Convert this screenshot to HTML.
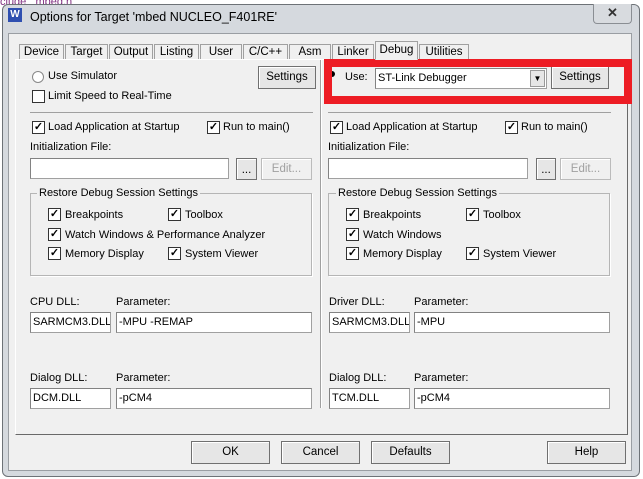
<!DOCTYPE html>
<html><head><meta charset="utf-8"><style>
*{box-sizing:border-box;margin:0;padding:0}
body{width:643px;height:479px;background:#fff;position:relative;overflow:hidden;font-family:"Liberation Sans",sans-serif;font-size:11px;color:#000}
.a{position:absolute;white-space:nowrap}
.frame{left:2px;top:4px;width:638px;height:473px;background:#d5d9de;border:1px solid #6d7277;border-radius:6px}
.client{left:8px;top:33px;width:624px;height:438px;background:#f0f0f0;border:1px solid #9a9ea3}
.tab{top:44px;height:16px;border:1px solid #a0a0a0;border-bottom:none;background:#f0f0f0;text-align:center;line-height:14px;font-size:11.5px}
.panel{left:15px;top:59px;width:613px;height:376px;border:1px solid #a0a0a0;border-top-color:#fff;border-left-color:#fff;border-right-color:#696969;border-bottom-color:#696969;background:#f0f0f0}
.btn{background:#e6e6e6;border:1px solid #707070;text-align:center;font-size:11.5px;line-height:20px;box-shadow:inset 1px 1px #fff}
.inp{background:#fff;border:1px solid #a0a0a0;border-top-color:#828282;border-left-color:#828282;height:21px;line-height:19px;padding-left:2px;font-size:11px;overflow:hidden}
.cb{width:13px;height:13px;border:1px solid #333;background:#fff;font-size:11px;line-height:11px;text-align:center;font-weight:bold}
.grp{border:1px solid #b5b5b5;box-shadow:1px 1px #fff}
.gl{background:#f0f0f0;padding:0 2px}
</style></head><body>
<div class="a" style="left:0;top:-4px;color:#803080;font-size:11px">clude&nbsp;&nbsp; mbed.h</div>
<div class="a frame"></div>
<div class="a" style="left:8px;top:8px;width:14px;height:14px;background:#2e4fb0;color:#fff;font-size:10px;line-height:14px;text-align:center;font-weight:bold">W</div>
<div class="a" style="left:30px;top:10px;font-size:12.5px">Options for Target 'mbed NUCLEO_F401RE'</div>
<div class="a" style="left:593px;top:4px;width:39px;height:20px;border:1px solid #8a8e93;border-top:none;border-radius:0 0 4px 4px;background:#d8dbdf;text-align:center;font-weight:bold;color:#333;line-height:18px;font-size:13px">✕</div>
<div class="a client"></div>

<div class="a tab" style="left:19px;width:45px">Device</div>
<div class="a tab" style="left:65px;width:43px">Target</div>
<div class="a tab" style="left:109px;width:44px">Output</div>
<div class="a tab" style="left:154px;width:45px">Listing</div>
<div class="a tab" style="left:200px;width:42px">User</div>
<div class="a tab" style="left:243px;width:45px">C/C++</div>
<div class="a tab" style="left:289px;width:42px">Asm</div>
<div class="a panel"></div>
<div class="a tab" style="left:332px;width:42px">Linker</div>
<div class="a tab" style="left:375px;width:43px;top:41px;height:19px;line-height:16px;border-bottom:1px solid #f0f0f0;z-index:2">Debug</div>
<div class="a tab" style="left:419px;width:50px">Utilities</div>

<div class="a" style="left:320px;top:60px;width:1px;height:348px;background:#a0a0a0;border-right:1px solid #fff;box-sizing:content-box"></div>
<div class="a" style="left:30px;top:112px;width:283px;height:1px;background:#a0a0a0"></div>
<div class="a" style="left:328px;top:112px;width:283px;height:1px;background:#a0a0a0"></div>

<div class="a" style="left:32px;top:71px;width:12px;height:12px;border:1px solid #888;border-radius:50%;background:#fff"></div>
<div class="a" style="left:48px;top:70px">Use Simulator</div>
<div class="a cb" style="left:32px;top:90px"></div>
<div class="a" style="left:48px;top:90px">Limit Speed to Real-Time</div>
<div class="a btn" style="left:258px;top:66px;width:58px;height:23px">Settings</div>

<div class="a" style="left:329px;top:71px;width:6px;height:6px;border-radius:50%;background:#000"></div>
<div class="a" style="left:345px;top:71px">Use:</div>
<div class="a inp" style="left:375px;top:68px;width:172px;height:21px;line-height:18px">ST-Link Debugger</div>
<div class="a" style="left:530px;top:70px;width:15px;height:17px;background:#e6e6e6;border:1px solid #999;font-size:8px;text-align:center;line-height:16px">▼</div>
<div class="a btn" style="left:551px;top:66px;width:58px;height:23px">Settings</div>
<div class="a" style="left:324px;top:59px;width:308px;height:45px;border:8px solid #ed1c24"></div>

<div class="a cb" style="left:32px;top:121px">✓</div><div class="a" style="left:48px;top:121px">Load Application at Startup</div>
<div class="a cb" style="left:207px;top:121px">✓</div><div class="a" style="left:223px;top:121px">Run to main()</div>
<div class="a" style="left:30px;top:141px">Initialization File:</div>
<div class="a inp" style="left:30px;top:158px;width:199px"></div>
<div class="a btn" style="left:236px;top:158px;width:21px;height:22px;line-height:22px">...</div>
<div class="a btn" style="left:261px;top:158px;width:51px;height:22px;color:#a0a0a0;background:#f0f0f0;border-color:#bbb">Edit...</div>
<div class="a grp" style="left:30px;top:193px;width:282px;height:83px"></div>
<div class="a gl" style="left:37px;top:187px">Restore Debug Session Settings</div>
<div class="a cb" style="left:48px;top:208px">✓</div><div class="a" style="left:65px;top:209px">Breakpoints</div>
<div class="a cb" style="left:168px;top:208px">✓</div><div class="a" style="left:185px;top:209px">Toolbox</div>
<div class="a cb" style="left:48px;top:228px">✓</div><div class="a" style="left:65px;top:229px">Watch Windows &amp; Performance Analyzer</div>
<div class="a cb" style="left:48px;top:247px">✓</div><div class="a" style="left:65px;top:248px">Memory Display</div>
<div class="a cb" style="left:168px;top:247px">✓</div><div class="a" style="left:185px;top:248px">System Viewer</div>
<div class="a" style="left:30px;top:296px">CPU DLL:</div><div class="a" style="left:116px;top:296px">Parameter:</div>
<div class="a inp" style="left:30px;top:312px;width:81px">SARMCM3.DLL</div>
<div class="a inp" style="left:116px;top:312px;width:196px">-MPU -REMAP</div>
<div class="a" style="left:30px;top:372px">Dialog DLL:</div><div class="a" style="left:116px;top:372px">Parameter:</div>
<div class="a inp" style="left:30px;top:388px;width:81px">DCM.DLL</div>
<div class="a inp" style="left:116px;top:388px;width:196px">-pCM4</div>

<div class="a cb" style="left:330px;top:121px">✓</div><div class="a" style="left:346px;top:121px">Load Application at Startup</div>
<div class="a cb" style="left:505px;top:121px">✓</div><div class="a" style="left:521px;top:121px">Run to main()</div>
<div class="a" style="left:328px;top:141px">Initialization File:</div>
<div class="a inp" style="left:328px;top:158px;width:200px"></div>
<div class="a btn" style="left:536px;top:158px;width:20px;height:22px;line-height:22px">...</div>
<div class="a btn" style="left:560px;top:158px;width:51px;height:22px;color:#a0a0a0;background:#f0f0f0;border-color:#bbb">Edit...</div>
<div class="a grp" style="left:328px;top:193px;width:282px;height:83px"></div>
<div class="a gl" style="left:336px;top:187px">Restore Debug Session Settings</div>
<div class="a cb" style="left:346px;top:208px">✓</div><div class="a" style="left:363px;top:209px">Breakpoints</div>
<div class="a cb" style="left:466px;top:208px">✓</div><div class="a" style="left:483px;top:209px">Toolbox</div>
<div class="a cb" style="left:346px;top:228px">✓</div><div class="a" style="left:363px;top:229px">Watch Windows</div>
<div class="a cb" style="left:346px;top:247px">✓</div><div class="a" style="left:363px;top:248px">Memory Display</div>
<div class="a cb" style="left:466px;top:247px">✓</div><div class="a" style="left:483px;top:248px">System Viewer</div>
<div class="a" style="left:329px;top:296px">Driver DLL:</div><div class="a" style="left:414px;top:296px">Parameter:</div>
<div class="a inp" style="left:329px;top:312px;width:81px">SARMCM3.DLL</div>
<div class="a inp" style="left:414px;top:312px;width:196px">-MPU</div>
<div class="a" style="left:329px;top:372px">Dialog DLL:</div><div class="a" style="left:414px;top:372px">Parameter:</div>
<div class="a inp" style="left:329px;top:388px;width:81px">TCM.DLL</div>
<div class="a inp" style="left:414px;top:388px;width:196px">-pCM4</div>

<div class="a btn" style="left:191px;top:441px;width:79px;height:23px">OK</div>
<div class="a btn" style="left:281px;top:441px;width:79px;height:23px">Cancel</div>
<div class="a btn" style="left:371px;top:441px;width:79px;height:23px">Defaults</div>
<div class="a btn" style="left:547px;top:441px;width:79px;height:23px">Help</div>
</body></html>
